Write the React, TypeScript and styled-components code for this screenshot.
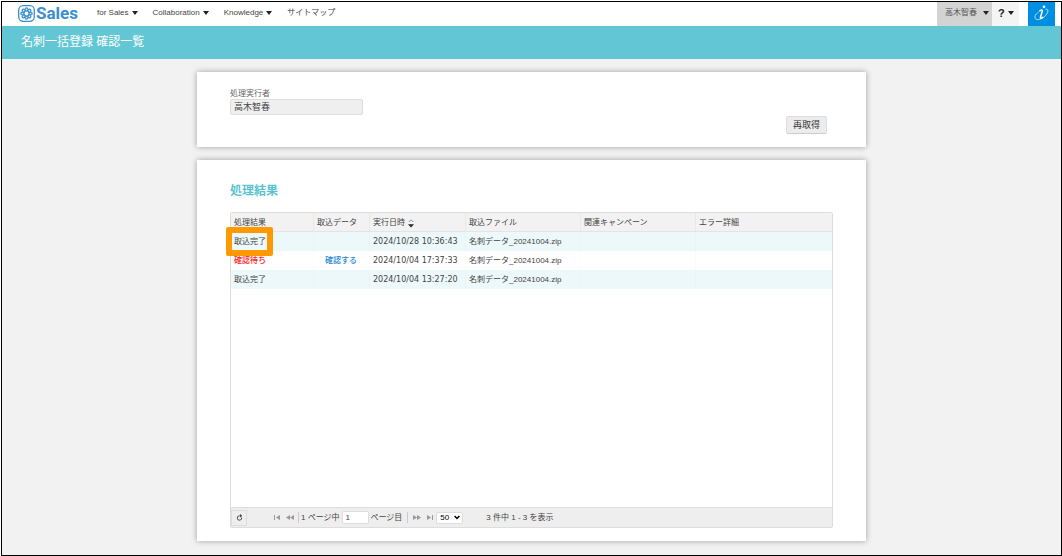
import React from "react";
import styled, { createGlobalStyle } from "styled-components";

const sans = `"Liberation Sans", "Noto Sans CJK JP", sans-serif`;
const wide = `"DejaVu Sans", "Noto Sans CJK JP", sans-serif`;

const GlobalStyle = createGlobalStyle`
  * { box-sizing: border-box; }
  body { margin: 0; background: #fff; font-family: ${sans}; font-size: 8px; line-height: 12px; color: #444; }
  button, input, select { font: inherit; color: inherit; margin: 0; }
`;

const Frame = styled.div`
  min-height: calc(100vh - 1px);
  margin: 1px 0 0 1px;
  border: 1px solid #000;
  background: #f2f2f2;
`;

const TopBar = styled.header`
  display: flex;
  height: 24px;
  padding: 0 6px 0 16px;
  background: #fff;
`;

const Logo = styled.a`
  display: flex;
  align-items: center;
  gap: 1px;
  width: 59px;
  height: 22px;
  margin-right: 20px;
  color: #3a8fd0;
  font: bold 17px/22px Roboto, sans-serif;
  text-decoration: none;
  svg { flex: none; }
`;

const Nav = styled.nav`
  display: flex;
  align-items: center;
  gap: 15px;
  flex: 1;
  height: 22px;
`;

const NavButton = styled.button`
  display: flex;
  align-items: center;
  gap: 3px;
  padding: 0;
  border: 0;
  background: none;
  white-space: nowrap;
  line-height: 12px;
`;

const NavLink = styled.a`
  color: inherit;
  text-decoration: none;
  white-space: nowrap;
`;

const Caret = styled.span`
  border: 3px solid transparent;
  border-top: 4px solid #222;
  border-bottom: 0;
`;

const UserButton = styled.button`
  display: flex;
  align-items: center;
  justify-content: space-between;
  width: 55px;
  padding: 0 3px 2px 8px;
  border: 0;
  background: #d3d3d3;
  color: #555;
`;

const HelpButton = styled.button`
  display: flex;
  align-items: center;
  justify-content: space-between;
  width: 27px;
  margin-right: 9px;
  padding: 0 5px 2px 6px;
  border: 0;
  background: #f4f4f4;
  color: #222;
  font: bold 11px/12px ${sans};
`;

const InfoLink = styled.a`
  display: flex;
  align-items: center;
  justify-content: center;
  width: 27px;
  padding-bottom: 2px;
  background: #008ee2;
`;

const TitleBar = styled.div`
  padding: 0 19px;
  background: #62c6d5;
  color: #fff;
`;

const PageTitle = styled.h1`
  margin: 0;
  font-size: 12px;
  font-weight: 400;
  line-height: 33px;
`;

const Main = styled.main`
  display: grid;
  gap: 13px;
  max-width: 669px;
  margin: 0 auto;
  padding: 13px 0;
`;

const Card = styled.section`
  padding: 16px 33px 13px;
  background: #fff;
  box-shadow: 0 0 6px rgba(0, 0, 0, 0.35);
`;

const Field = styled.label`
  display: grid;
  width: 133px;
  color: #666;
  line-height: 11px;
`;

const ReadOnlyInput = styled.input`
  width: 100%;
  height: 16px;
  padding: 0 3px 2px;
  border: 1px solid #ddd;
  border-radius: 2px;
  background: #efefef;
  color: #444;
  font-size: 9px;
`;

const Actions = styled.div`
  display: flex;
  justify-content: flex-end;
  padding: 1px 6px 0 0;
`;

const ActionButton = styled.button`
  width: 41px;
  height: 18px;
  padding: 0;
  border: 1px solid #ddd;
  border-bottom-color: #ccc;
  border-radius: 2px;
  background: #ececec;
  color: #333;
  font-size: 9px;
`;

const SectionTitle = styled.h2`
  margin: 0 0 13px;
  padding-top: 7px;
  color: #5ac3d2;
  font-size: 12px;
  line-height: 16px;
`;

const Grid = styled.div`
  border: 1px solid #ddd;
  border-radius: 2px;
`;

const GridBody = styled.div`
  min-height: 294px;
`;

const Table = styled.table`
  width: 100%;
  table-layout: fixed;
  border-collapse: separate;
  border-spacing: 0;
`;

const Col = styled.col<{ $w?: number }>`
  ${({ $w }) => ($w ? `width: ${$w}px;` : "")}
`;

const HeadCell = styled.th`
  height: 19px;
  padding: 2px 3px 0;
  border-right: 1px solid #e8e8e8;
  border-bottom: 1px solid #e4e4e4;
  background: #f2f2f2;
  font-weight: 400;
  text-align: left;
  white-space: nowrap;
  &:last-child { border-right: 0; }
`;

const Row = styled.tr<{ $tinted: boolean }>`
  background: ${({ $tinted }) => ($tinted ? "#ecf8fa" : "#fff")};
`;

const Cell = styled.td<{ $wide?: boolean; $alert?: boolean }>`
  position: relative;
  height: 19px;
  padding: 0 3px;
  border-right: 1px solid rgba(0, 0, 0, 0.015);
  color: ${({ $alert }) => ($alert ? "#f22" : "#444")};
  font-family: ${({ $wide }) => ($wide ? wide : sans)};
  font-weight: ${({ $alert }) => ($alert ? 500 : 400)};
  white-space: nowrap;
  &:last-child { border-right: 0; }
`;

const Highlight = styled.span`
  position: absolute;
  z-index: 1;
  top: -5px;
  left: -5px;
  width: 47px;
  height: 29px;
  border: 6px solid #ff9900;
  border-radius: 2px;
`;

const SortButton = styled.button`
  display: flex;
  align-items: center;
  gap: 3px;
  padding: 0;
  border: 0;
  background: none;
`;

const ConfirmLink = styled.a`
  display: block;
  padding-left: 8px;
  color: #1c85d6;
  font-weight: 500;
  text-decoration: none;
`;

const Pager = styled.footer`
  display: flex;
  align-items: center;
  height: 20px;
  border-top: 1px solid #ddd;
  background: #eee;
  white-space: nowrap;
`;

const RefreshButton = styled.button`
  display: grid;
  place-items: center;
  width: 16px;
  height: 16px;
  margin: 0 23px 0 0;
  padding: 0;
  border: 1px solid #ddd;
  background: #eee;
`;

const PageButton = styled.button`
  display: grid;
  place-items: center;
  width: 13px;
  height: 16px;
  padding: 0;
  border: 0;
  background: none;
`;

const Divider = styled.span`
  width: 1px;
  height: 11px;
  margin: 0 2px;
  background: #ccc;
`;

const PageField = styled.label`
  display: flex;
  align-items: center;
  gap: 2px;
  margin-right: 3px;
`;

const PageInput = styled.input`
  width: 27px;
  height: 13px;
  padding: 0 3px;
  border: 1px solid #ddd;
  border-radius: 2px;
  background: #fff;
`;

const SizeBox = styled.span`
  position: relative;
  display: flex;
  align-items: center;
  margin-right: 23px;
  svg { position: absolute; right: 3px; pointer-events: none; }
`;

const SizeSelect = styled.select`
  appearance: none;
  width: 27px;
  height: 12px;
  padding: 0 3px;
  border: 1px solid #ddd;
  border-radius: 2px;
  background: #fff;
  color: #000;
  line-height: 10px;
`;

const petals = [0, 45, 90, 135, 180, 225, 270, 315];

const LogoMark = () => (
  <svg width="17" height="17" viewBox="0 0 17 17">
    <rect x="0.7" y="0.7" width="15.6" height="15.6" rx="4.5" fill="none" stroke="#3a8fd0" strokeWidth="1.3" />
    {petals.map((a) => (
      <circle key={a} cx="8.5" cy="4.2" r="1.9" fill="#3a8fd0" transform={`rotate(${a} 8.5 8.5)`} />
    ))}
    <circle cx="8.5" cy="8.5" r="3.6" fill="#3a8fd0" />
    {petals.map((a) => (
      <circle key={a} cx="8.5" cy="4.4" r="0.85" fill="#d8eaf7" transform={`rotate(${a} 8.5 8.5)`} />
    ))}
    <circle cx="8.5" cy="8.5" r="1.9" fill="#fff" />
  </svg>
);

const InfoMark = () => (
  <svg width="19" height="20" viewBox="0 0 19 20" fill="none" stroke="#fff" strokeLinecap="round">
    <path d="M7.8 7.8C9.2 7 10.7 6.6 10.3 8.2L8.5 14C8.1 15.6 9.4 15.4 10.8 14.4" strokeWidth="1.5" />
    <circle cx="12" cy="3.8" r="1.3" fill="#fff" stroke="none" />
    <path d="M6.3 9.3C2.8 11.5 2.4 14.2 3.4 15.6C5 17.8 10.2 16.2 13.6 12.5C16.6 9 17 6 13.8 6.1" strokeWidth="0.7" />
  </svg>
);

const SortMark = () => (
  <svg width="6" height="9" viewBox="0 0 6 9">
    <path d="M0.8 3L3 0.8L5.2 3" fill="none" stroke="#777" strokeWidth="0.8" />
    <path d="M0 5.3H6L3 8.6Z" fill="#222" />
  </svg>
);

const RefreshMark = () => (
  <svg width="7" height="7" viewBox="0 0 7 7" fill="none" stroke="#444">
    <path d="M5.6 3.4A2.2 2.2 0 1 1 3.6 1.8H5.4" strokeWidth="0.9" />
    <path d="M4 0L6.2 1.8L4 3.4Z" fill="#444" stroke="none" />
  </svg>
);

type Arrow = { label: string; d: string };
const backward: Arrow[] = [
  { label: "最初のページ", d: "M1 1H2V6H1ZM7 1V6L3 3.5Z" },
  { label: "前のページ", d: "M4 1V6L0 3.5ZM8 1V6L4 3.5Z" },
];
const forward: Arrow[] = [
  { label: "次のページ", d: "M0 1V6L4 3.5ZM4 1V6L8 3.5Z" },
  { label: "最後のページ", d: "M1 1V6L5 3.5ZM6 1H7V6H6Z" },
];

const PageArrow = ({ label, d }: Arrow) => (
  <PageButton type="button" aria-label={label}>
    <svg width="8" height="7" viewBox="0 0 8 7" fill="#999">
      <path d={d} />
    </svg>
  </PageButton>
);

const menus = ["for Sales", "Collaboration", "Knowledge"];

const rows = [
  { result: "取込完了", waiting: false, date: "2024/10/28 10:36:43", marked: true },
  { result: "確認待ち", waiting: true, date: "2024/10/04 17:37:33", marked: false },
  { result: "取込完了", waiting: false, date: "2024/10/04 13:27:20", marked: false },
];

export default function App() {
  return (
    <>
      <GlobalStyle />
      <Frame lang="ja">
        <TopBar>
          <Logo href="#">
            <LogoMark />
            Sales
          </Logo>
          <Nav>
            {menus.map((m) => (
              <NavButton key={m} type="button">
                {m}
                <Caret />
              </NavButton>
            ))}
            <NavLink href="#">サイトマップ</NavLink>
          </Nav>
          <UserButton type="button">
            高木智春
            <Caret />
          </UserButton>
          <HelpButton type="button">
            ?
            <Caret />
          </HelpButton>
          <InfoLink href="#" aria-label="インフォメーション">
            <InfoMark />
          </InfoLink>
        </TopBar>
        <TitleBar>
          <PageTitle>名刺一括登録 確認一覧</PageTitle>
        </TitleBar>
        <Main>
          <Card>
            <Field>
              処理実行者
              <ReadOnlyInput readOnly value="高木智春" />
            </Field>
            <Actions>
              <ActionButton type="button">再取得</ActionButton>
            </Actions>
          </Card>
          <Card>
            <SectionTitle>処理結果</SectionTitle>
            <Grid>
              <GridBody>
                <Table>
                  <colgroup>
                    <Col $w={83} />
                    <Col $w={56} />
                    <Col $w={96} />
                    <Col $w={115} />
                    <Col $w={115} />
                    <Col />
                  </colgroup>
                  <thead>
                    <tr>
                      <HeadCell>処理結果</HeadCell>
                      <HeadCell>取込データ</HeadCell>
                      <HeadCell>
                        <SortButton type="button">
                          実行日時
                          <SortMark />
                        </SortButton>
                      </HeadCell>
                      <HeadCell>取込ファイル</HeadCell>
                      <HeadCell>関連キャンペーン</HeadCell>
                      <HeadCell>エラー詳細</HeadCell>
                    </tr>
                  </thead>
                  <tbody>
                    {rows.map((r, i) => (
                      <Row key={r.date} $tinted={i % 2 === 0}>
                        <Cell $alert={r.waiting}>
                          {r.result}
                          {r.marked && <Highlight />}
                        </Cell>
                        <Cell>{r.waiting && <ConfirmLink href="#">確認する</ConfirmLink>}</Cell>
                        <Cell $wide>{r.date}</Cell>
                        <Cell>名刺データ_20241004.zip</Cell>
                        <Cell />
                        <Cell />
                      </Row>
                    ))}
                  </tbody>
                </Table>
              </GridBody>
              <Pager>
                <RefreshButton type="button" aria-label="更新">
                  <RefreshMark />
                </RefreshButton>
                {backward.map((a) => (
                  <PageArrow key={a.label} {...a} />
                ))}
                <Divider />
                <PageField>
                  1 ページ中
                  <PageInput defaultValue="1" />
                  ページ目
                </PageField>
                <Divider />
                {forward.map((a) => (
                  <PageArrow key={a.label} {...a} />
                ))}
                <SizeBox>
                  <SizeSelect aria-label="表示件数" defaultValue="50">
                    <option>50</option>
                    <option>100</option>
                  </SizeSelect>
                  <svg width="6" height="5" viewBox="0 0 6 5" fill="none" stroke="#000" strokeWidth="1.5">
                    <path d="M0.6 1L3 3.5L5.4 1" />
                  </svg>
                </SizeBox>
                <span>3 件中 1 - 3 を表示</span>
              </Pager>
            </Grid>
          </Card>
        </Main>
      </Frame>
    </>
  );
}
